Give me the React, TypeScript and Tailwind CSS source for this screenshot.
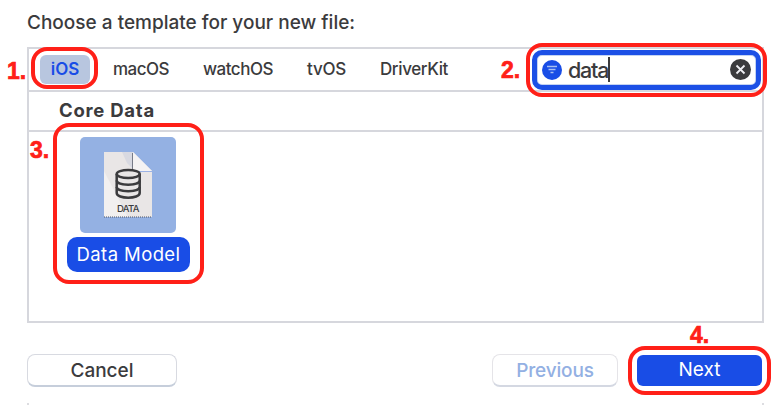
import React from "react";

const tabs = [
  { name: "macOS", style: "ml-[23px] w-[90px] tracking-[-0.55px]" },
  { name: "watchOS", style: "w-[104px] tracking-[-0.5px]" },
  { name: "tvOS", style: "w-[73px] tracking-[-0.2px]" },
  { name: "DriverKit", style: "tracking-[-0.4px]" },
];

function DataFileIcon() {
  return (
    <svg className="h-[68px] w-[50px]" viewBox="0 0 50 68" fill="none">
      <path d="M1 1H30L49 20V66H1Z" fill="#e9e6e6" />
      <path d="M1 20V66H25Z" fill="#f2f0f0" />
      <path d="M19 1H30V18L24 12Z" fill="#d8d9e1" />
      <path d="M30 1L49 20H30Z" fill="#f5f3f3" />
      <path d="M29.5 2V19" stroke="#777b88" strokeWidth="1" />
      <path d="M35 20.5H49" stroke="#9bb2e5" strokeWidth="1" />
      <path d="M1 66H49" stroke="#505667" strokeWidth="1" strokeDasharray="1 1" />
      <g stroke="#3b3b3d" strokeWidth="2.5">
        <ellipse cx="25.2" cy="23" rx="11.5" ry="4" fill="#e9e6e6" />
        <path d="M13.7 23V42C13.7 48.3 36.7 48.3 36.7 42V23" />
        <path d="M13.7 29.5C13.7 35 36.7 35 36.7 29.5M13.7 36C13.7 41.5 36.7 41.5 36.7 36" />
      </g>
      <text x="14" y="60.5" fontSize="9.5" fontWeight="500" textLength="22.5" fill="#3b3b3d">DATA</text>
    </svg>
  );
}

function SearchField() {
  return (
    <div className="relative flex h-10 w-[229px] items-center rounded-[10px] border-[5px] border-[#1c50e6] bg-white px-[5px] shadow-[inset_0_0_0_1px_#c4d3f2]">
      <svg className="size-5 shrink-0" viewBox="0 0 20 20">
        <circle cx="10" cy="10" r="10" fill="#194de6" />
        <path d="M5 6.5H15M6.5 9.5H13.5M8.5 12.5H11.5" stroke="#a9bff0" strokeWidth="1.5" />
      </svg>
      <span className="ml-[6px] text-[21.5px] font-medium leading-6 tracking-[-1.2px]">data</span>
      <span className="absolute left-[71px] top-[2px] h-[25px] w-[2px] bg-[#3b3b3d]" />
      <svg className="ml-auto size-[21px] shrink-0" viewBox="0 0 21 21">
        <circle cx="10.5" cy="10.5" r="10.5" fill="#3b3b3d" />
        <path d="M6.5 6.5L14.5 14.5M14.5 6.5L6.5 14.5" stroke="#f0f0f4" strokeWidth="1.8" />
      </svg>
    </div>
  );
}

function Annotations() {
  const ring = "absolute border-4 border-[#ff2018]";
  const num = "absolute text-[23px] font-bold leading-6 text-[#ff2018] [-webkit-text-stroke:0.7px_#ff2018] font-['Liberation_Sans',sans-serif]";
  return (
    <div className="pointer-events-none absolute inset-0">
      <div className={`${ring} left-[31px] top-[47px] h-[42px] w-[67px] rounded-[16px]`} />
      <div className={`${ring} left-[526px] top-[43px] h-[54px] w-[241px] rounded-[16px]`} />
      <div className={`${ring} left-[53px] top-[123px] h-[161px] w-[151px] rounded-[16px]`} />
      <div className={`${ring} left-[628px] top-[346px] h-[49px] w-[143px] rounded-[17px]`} />
      <span className={`${num} left-[7px] top-[59px]`}>1.</span>
      <span className={`${num} left-[501px] top-[58px]`}>2.</span>
      <span className={`${num} left-[30px] top-[138px]`}>3.</span>
      <span className={`${num} left-[690px] top-[323px]`}>4.</span>
    </div>
  );
}

export default function App() {
  return (
    <main className="relative h-[405px] w-[783px] overflow-hidden bg-white pl-[27px] font-['Inter',sans-serif] text-[#3b3b3d]">
      <h1 className="flex h-[47px] items-center text-[19px] font-medium">Choose a template for your new file:</h1>

      <section className="h-[276px] w-[737px] border-2 border-[#d6d7dd]">
        <header className="flex h-[43px] items-center border-b-2 border-[#d6d7dd] pl-[11px] text-[17px] font-medium">
          <button className="h-[29px] w-[50px] rounded-[6px] bg-[#b8c6df] text-[17px] font-semibold text-[#194de6]">iOS</button>
          {tabs.map((tab) => (
            <span key={tab.name} className={tab.style}>{tab.name}</span>
          ))}
          <div className="ml-auto mr-px"><SearchField /></div>
        </header>
        <h2 className="flex h-[40px] items-center border-b-2 border-[#d6d7dd] pl-[30px] text-[18.5px] font-bold tracking-[0.75px]">Core Data</h2>
        <div className="ml-[38px] w-[123px] pt-[5px]">
          <div className="ml-[13px] flex size-24 items-center justify-center rounded-[5px] bg-[#94b1e3]"><DataFileIcon /></div>
          <span className="mt-[4px] flex h-[35px] w-[123px] items-center justify-center rounded-[10px] bg-[#194de6] pt-px text-[18.5px] tracking-[0.4px] text-white">Data Model</span>
        </div>
      </section>

      <footer className="mt-[31px] flex h-[33px] w-[735px] text-[19px]">
        <button className="h-[33px] w-[150px] rounded-[8px] border border-b-2 border-[#d8dae1] border-b-[#c6cedb] pt-[2px] font-medium">Cancel</button>
        <button className="ml-auto h-[33px] w-[126px] rounded-[8px] border border-b-2 border-[#e5e4e8] border-b-[#d4d8e2] pt-[2px] font-medium tracking-[-0.15px] text-[#93b0e3]">Previous</button>
        <button className="ml-[19px] mt-px h-[31px] w-[125px] rounded-[6px] bg-[#194de6] text-white">Next</button>
      </footer>
      <div className="mt-4 flex h-0.5 w-[737px] justify-between">
        <span className="w-0.5 bg-[#dddde1]" />
        <span className="w-0.5 bg-[#dddde1]" />
      </div>
      <Annotations />
    </main>
  );
}
